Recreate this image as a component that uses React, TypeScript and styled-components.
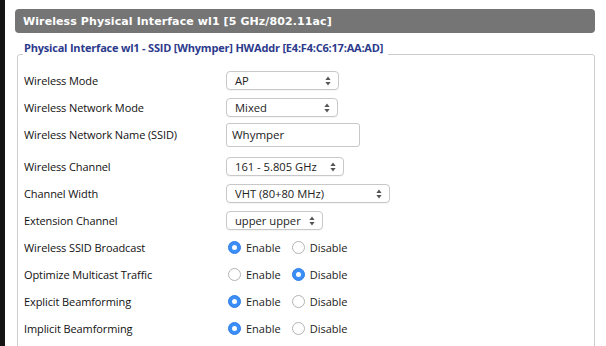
import React from "react";
import styled, { createGlobalStyle } from "styled-components";

const GlobalStyle = createGlobalStyle`
  html, body {
    margin: 0;
    padding: 0;
    background: #ffffff;
  }
  body {
    font-family: "DejaVu Sans", Verdana, sans-serif;
  }
`;

const Page = styled.div`
  display: flex;
  width: 606px;
  height: 346px;
  overflow: hidden;
  background: #ffffff;
`;

const SideStrip = styled.div`
  flex: 0 0 5px;
  background: #141414;
`;

const Content = styled.div`
  flex: 1;
  padding: 9px 11px 0 10px;
  display: flex;
  flex-direction: column;
  & > * {
    flex-shrink: 0;
  }
`;

const SectionHeader = styled.h2`
  margin: 0;
  height: 24px;
  display: flex;
  align-items: center;
  padding: 0 8px;
  background: #757575;
  border-radius: 4px;
  color: #ffffff;
  font-family: "DejaVu Sans", Verdana, sans-serif;
  font-weight: bold;
  font-size: 11px;
  letter-spacing: 0.1px;
`;

const Fieldset = styled.fieldset`
  margin: 8px 0 0 2px;
  padding: 0 0 20px 6px;
  border: 1px solid #cccccc;
  border-radius: 3px;
  min-width: 0;
`;

const Legend = styled.legend`
  padding: 0 5px 12px 1px;
  margin-left: -1px;
  line-height: 14px;
  color: #2b3a8c;
  font-family: "Open Sans", "DejaVu Sans", sans-serif;
  font-weight: bold;
  font-size: 11px;
  letter-spacing: -0.2px;
`;

const Row = styled.div<{ $h?: number; $pb?: number }>`
  display: grid;
  grid-template-columns: 202px 1fr;
  align-items: center;
  box-sizing: border-box;
  height: ${(p) => p.$h ?? 27}px;
  padding-bottom: ${(p) => p.$pb ?? 0}px;
`;

const Label = styled.div`
  font-family: "Open Sans", "DejaVu Sans", sans-serif;
  font-size: 11px;
  color: #111111;
  letter-spacing: -0.1px;
`;

const SelectBox = styled.div<{ $w: number }>`
  width: ${(p) => p.$w}px;
  height: 19px;
  box-sizing: border-box;
  display: flex;
  align-items: center;
  justify-content: space-between;
  padding: 0 7px 0 8px;
  border: 1px solid #c8c8c8;
  border-radius: 4px;
  background: #ffffff;
  box-shadow: 0 1px 0 rgba(0, 0, 0, 0.04);
  font-family: "Open Sans", "DejaVu Sans", sans-serif;
  font-size: 11.2px;
  color: #222222;
  white-space: nowrap;
`;

const TextInput = styled.div`
  width: 134px;
  height: 24px;
  box-sizing: border-box;
  display: flex;
  align-items: center;
  padding: 0 5px;
  border: 1px solid #c8c8c8;
  border-radius: 3px;
  font-family: "Open Sans", "DejaVu Sans", sans-serif;
  font-size: 11.5px;
  color: #222222;
`;

const RadioGroup = styled.div`
  display: flex;
  align-items: center;
`;

const RadioOption = styled.label`
  display: flex;
  align-items: center;
  gap: 5px;
  margin-right: 9px;
  font-family: "Open Sans", "DejaVu Sans", sans-serif;
  font-size: 11px;
  color: #222222;
`;

const RadioDot = styled.span<{ $on: boolean }>`
  width: 13px;
  height: 13px;
  box-sizing: border-box;
  margin-left: 2px;
  border-radius: 50%;
  display: flex;
  align-items: center;
  justify-content: center;
  background: ${(p) => (p.$on ? "#3a8ef6" : "#ffffff")};
  border: 1px solid ${(p) => (p.$on ? "#2f7fe8" : "#b3b3b3")};
  &::after {
    content: "";
    width: 5px;
    height: 5px;
    border-radius: 50%;
    background: #ffffff;
    display: ${(p) => (p.$on ? "block" : "none")};
  }
`;

const Arrows = () => (
  <svg width="6" height="10" viewBox="0 0 6 10">
    <path d="M3 0.5 L5.6 4 H0.4 Z" fill="#555" />
    <path d="M3 9.5 L5.6 6 H0.4 Z" fill="#555" />
  </svg>
);

const Select = ({ w, value }: { w: number; value: string }) => (
  <SelectBox $w={w}>
    <span>{value}</span>
    <Arrows />
  </SelectBox>
);

const EnableDisable = ({ enabled }: { enabled: boolean }) => (
  <RadioGroup>
    <RadioOption>
      <RadioDot $on={enabled} />
      Enable
    </RadioOption>
    <RadioOption>
      <RadioDot $on={!enabled} />
      Disable
    </RadioOption>
  </RadioGroup>
);

const radios = [
  { label: "Wireless SSID Broadcast", enabled: true },
  { label: "Optimize Multicast Traffic", enabled: false },
  { label: "Explicit Beamforming", enabled: true },
  { label: "Implicit Beamforming", enabled: true },
];

export default function App() {
  return (
    <>
      <GlobalStyle />
      <Page>
        <SideStrip />
        <Content>
          <SectionHeader>Wireless Physical Interface wl1 [5 GHz/802.11ac]</SectionHeader>
          <Fieldset>
            <Legend>Physical Interface wl1 - SSID [Whymper] HWAddr [E4:F4:C6:17:AA:AD]</Legend>
            <Row>
              <Label>Wireless Mode</Label>
              <Select w={113} value="AP" />
            </Row>
            <Row>
              <Label>Wireless Network Mode</Label>
              <Select w={112} value="Mixed" />
            </Row>
            <Row $h={32} $pb={5}>
              <Label>Wireless Network Name (SSID)</Label>
              <TextInput>Whymper</TextInput>
            </Row>
            <Row>
              <Label>Wireless Channel</Label>
              <Select w={118} value="161 - 5.805 GHz" />
            </Row>
            <Row>
              <Label>Channel Width</Label>
              <Select w={164} value="VHT (80+80 MHz)" />
            </Row>
            <Row>
              <Label>Extension Channel</Label>
              <Select w={97} value="upper upper" />
            </Row>
            {radios.map((r) => (
              <Row key={r.label}>
                <Label>{r.label}</Label>
                <EnableDisable enabled={r.enabled} />
              </Row>
            ))}
          </Fieldset>
        </Content>
      </Page>
    </>
  );
}
